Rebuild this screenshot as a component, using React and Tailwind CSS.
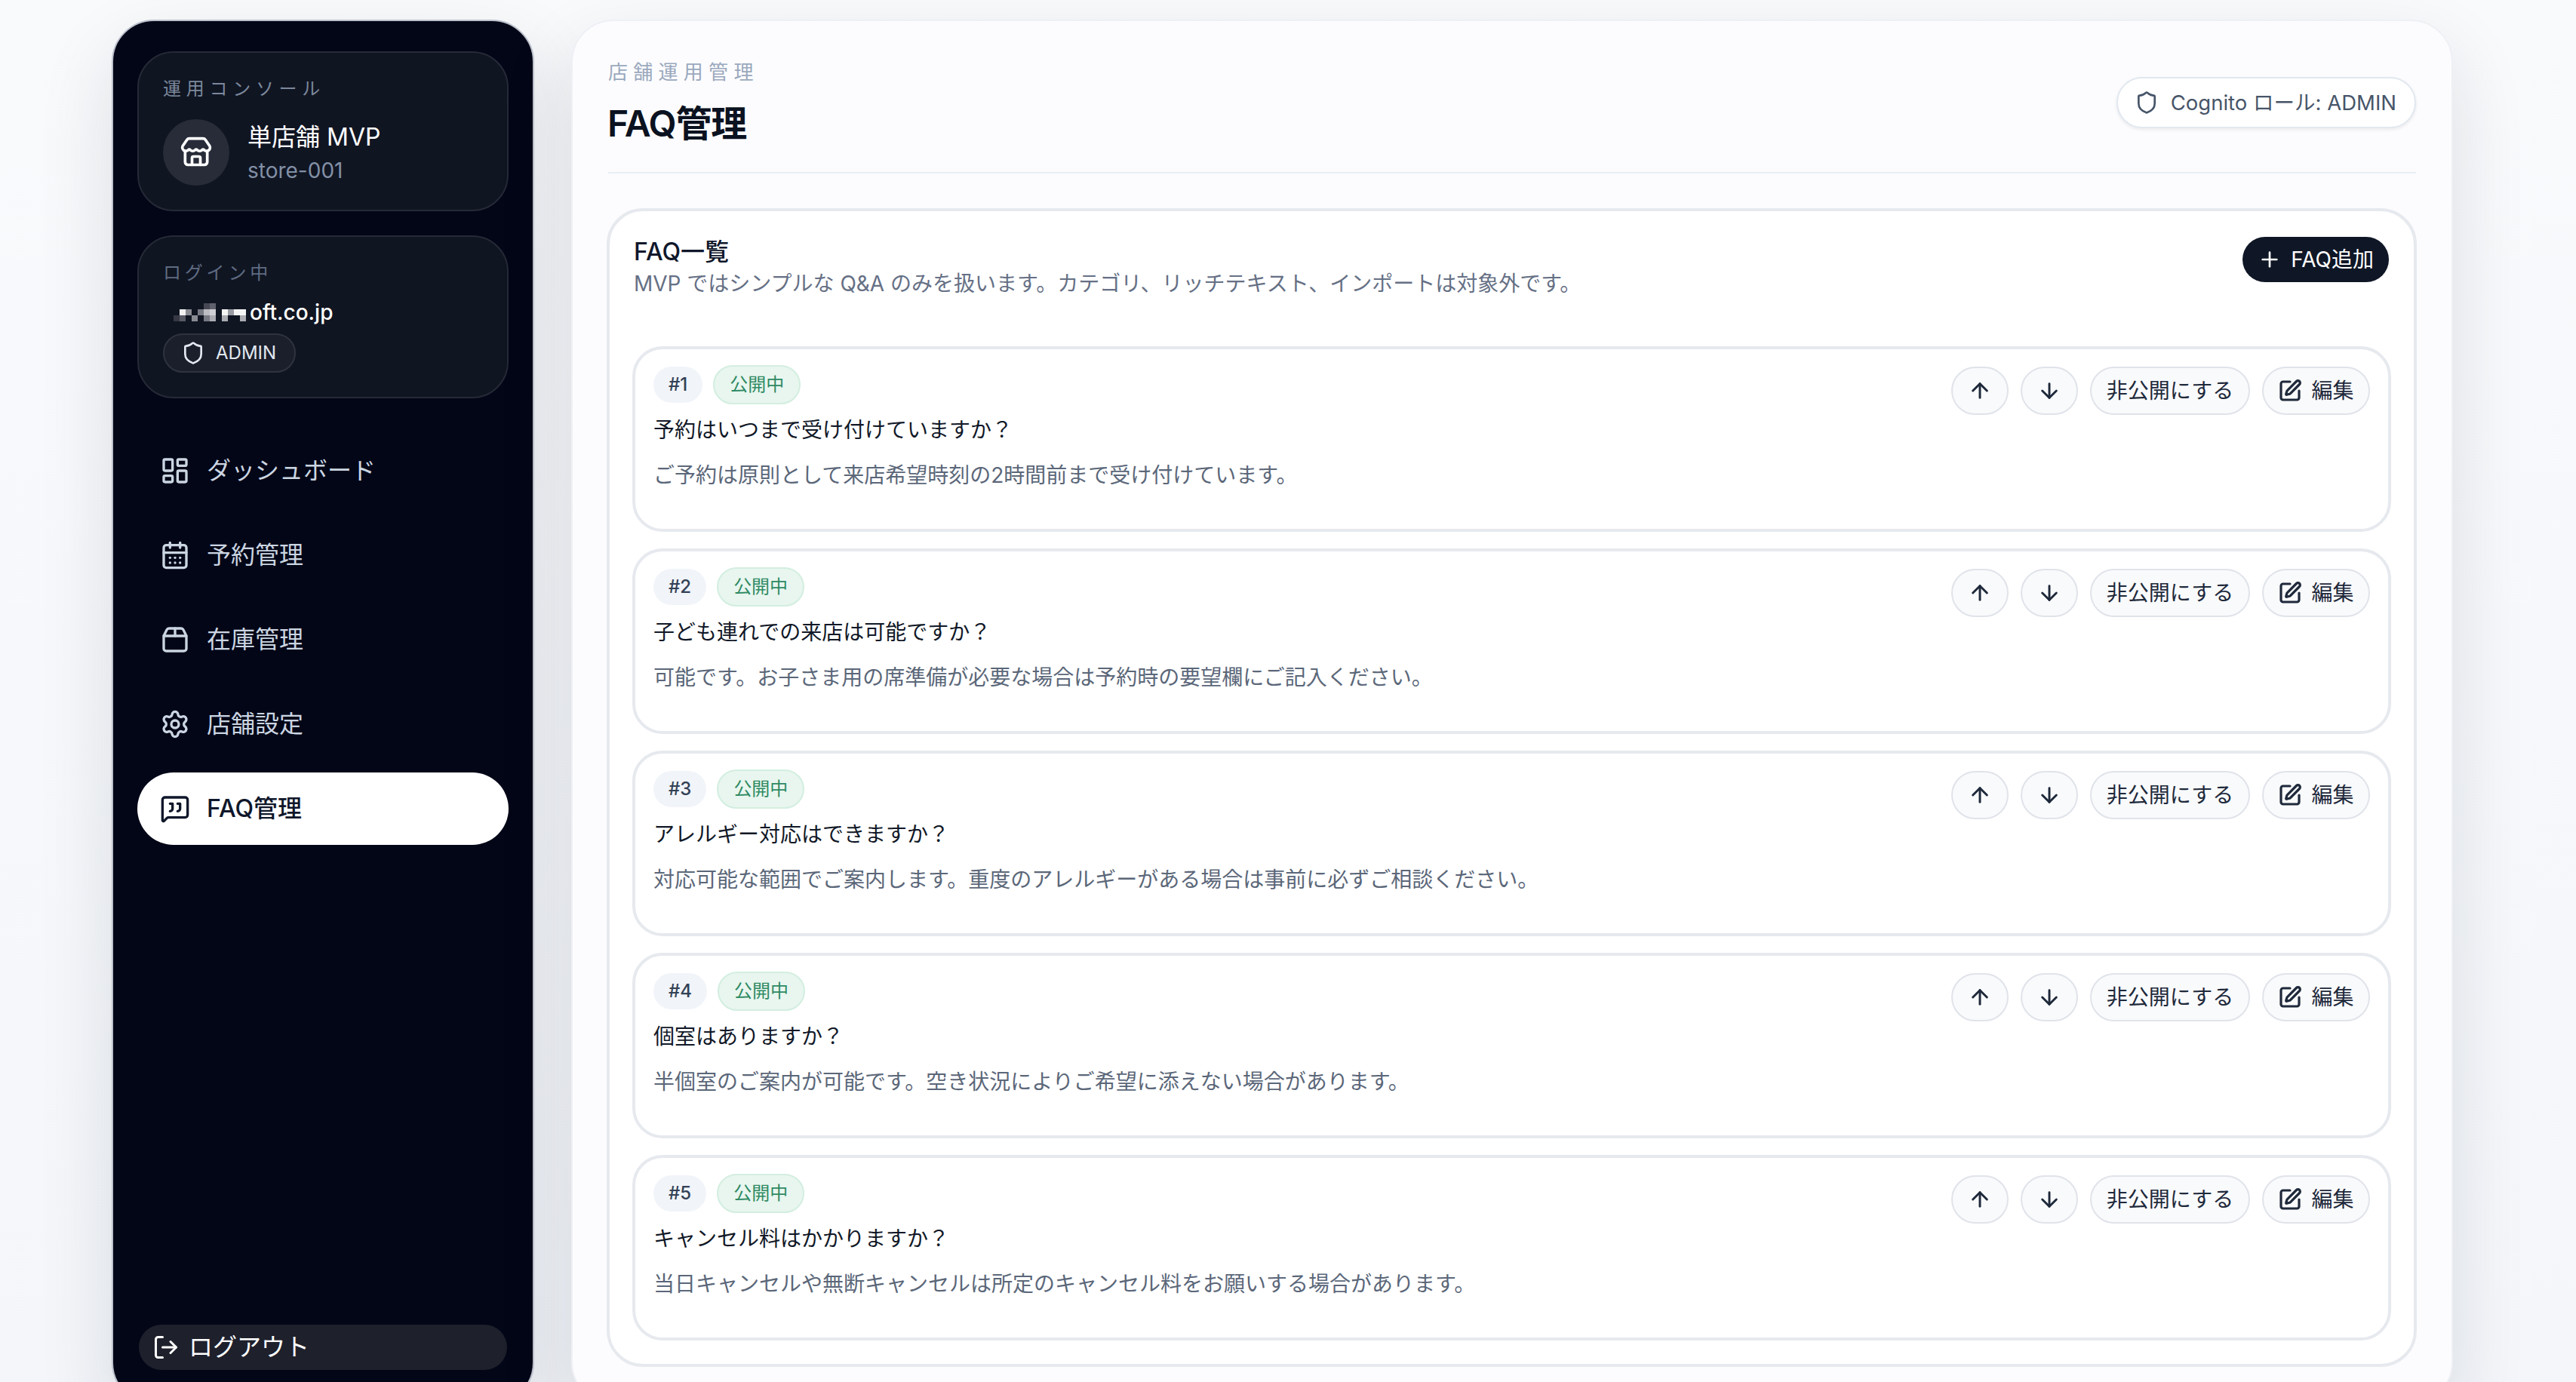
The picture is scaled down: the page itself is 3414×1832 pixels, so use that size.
import React from "react";
import {
  ArrowDown,
  ArrowUp,
  CalendarDays,
  LayoutDashboard,
  LogOut,
  MessageSquareQuote,
  Package2,
  Plus,
  Settings,
  Shield,
  SquarePen,
  Store,
} from "lucide-react";

const navItems = [
  { label: "ダッシュボード", Icon: LayoutDashboard },
  { label: "予約管理", Icon: CalendarDays },
  { label: "在庫管理", Icon: Package2 },
  { label: "店舗設定", Icon: Settings },
  { label: "FAQ管理", Icon: MessageSquareQuote, active: true },
];

const faqs = [
  { q: "予約はいつまで受け付けていますか？", a: "ご予約は原則として来店希望時刻の2時間前まで受け付けています。" },
  { q: "子ども連れでの来店は可能ですか？", a: "可能です。お子さま用の席準備が必要な場合は予約時の要望欄にご記入ください。" },
  { q: "アレルギー対応はできますか？", a: "対応可能な範囲でご案内します。重度のアレルギーがある場合は事前に必ずご相談ください。" },
  { q: "個室はありますか？", a: "半個室のご案内が可能です。空き状況によりご希望に添えない場合があります。" },
  { q: "キャンセル料はかかりますか？", a: "当日キャンセルや無断キャンセルは所定のキャンセル料をお願いする場合があります。" },
];

const pixels = [
  [5, 0, "#454852"], [6, 0, "#5f626c"],
  [1, 1, "#f2f2f2"], [2, 1, "#8a8c94"], [4, 1, "#777a83"], [5, 1, "#bcbdc2"], [6, 1, "#cfd0d4"],
  [8, 1, "#f5f5f5"], [9, 1, "#9a9ca3"], [10, 1, "#f5f5f5"], [11, 1, "#f5f5f5"],
  [0, 2, "#363944"], [1, 2, "#575a64"], [3, 2, "#8a8c94"], [5, 2, "#777a83"], [6, 2, "#aaacb2"],
  [8, 2, "#aaacb2"], [11, 2, "#aaacb2"],
];

function ActionButton({ children, className = "" }) {
  return (
    <button className={`flex h-[64px] items-center justify-center rounded-[32px] border-2 border-[#e0e3ea] bg-[#f9fafb] text-[28px] leading-10 text-[#1e293b] ${className}`}>
      {children}
    </button>
  );
}

function FaqItem({ index, q, a }) {
  return (
    <div className="flex h-[246px] items-start justify-between rounded-[40px] border-4 border-[#e6e9ee] bg-white px-6 pt-[21px]">
      <div>
        <div className="flex h-[52px] items-center gap-[14px]">
          <span className="flex h-12 items-center rounded-full bg-[#f1f4f9] px-5 text-[24px] font-medium leading-8 text-[#334155]">#{index}</span>
          <span className="flex h-[52px] items-center rounded-full border-2 border-[#d3eee0] bg-[#e8f6ef] px-5 text-[24px] leading-8 text-[#2f8a63]">公開中</span>
        </div>
        <p className="mt-[14px] text-[28px] leading-10 text-[#111827]">{q}</p>
        <p className="mt-5 text-[28px] leading-10 text-[#5b6779]">{a}</p>
      </div>
      <div className="mt-[2px] flex gap-4">
        <ActionButton className="w-[76px]"><ArrowUp size={32} strokeWidth={2.2} /></ActionButton>
        <ActionButton className="w-[76px]"><ArrowDown size={32} strokeWidth={2.2} /></ActionButton>
        <ActionButton className="w-[212px]">非公開にする</ActionButton>
        <ActionButton className="w-[143px] gap-3"><SquarePen size={32} strokeWidth={2.4} />編集</ActionButton>
      </div>
    </div>
  );
}

export default function App() {
  return (
    <div className="flex h-screen gap-[49px] overflow-hidden bg-[linear-gradient(180deg,#f9fafc_0%,#f4f6fa_100%)] pl-[148px] pt-[26px] font-['Inter','Noto_Sans_CJK_JP',sans-serif]">
      <aside className="flex h-[1836px] w-[560px] shrink-0 flex-col rounded-[56px] border-2 border-[#bcc1cc] bg-[#020617] px-8 pb-[44px] pt-10 shadow-[0_40px_100px_rgba(15,23,42,0.12)]">
        <div className="rounded-[48px] border-2 border-[#262a37] bg-[#101522] p-8">
          <div className="text-[24px] leading-8 tracking-[0.28em] text-[#7c889c]">運用コンソール</div>
          <div className="mt-6 flex items-center gap-6">
            <div className="flex h-[88px] w-[88px] items-center justify-center rounded-full bg-[#282c38]">
              <Store size={44} strokeWidth={2} className="text-white" />
            </div>
            <div>
              <div className="text-[32px] leading-[48px] text-white">単店舗 MVP</div>
              <div className="text-[28px] leading-10 text-[#8290a6]">store-001</div>
            </div>
          </div>
        </div>

        <div className="mt-8 rounded-[48px] border-2 border-[#262a37] bg-[#101522] p-8">
          <div className="text-[24px] leading-8 tracking-[0.2em] text-[#5f6c82]">ログイン中</div>
          <div className="mt-4 flex h-10 items-center text-[28px] font-medium leading-10 text-white">
            <svg width="115" height="24" viewBox="0 0 115 24" className="shrink-0">
              {pixels.map(([c, r, fill], i) => (
                <rect key={i} x={14 + c * 8} y={r * 8} width="8" height="8" fill={fill} />
              ))}
            </svg>
            <span>oft.co.jp</span>
          </div>
          <div className="mt-2 inline-flex h-[52px] items-center gap-[14px] rounded-full border-2 border-[#2f3340] bg-[#1b1f2c] pl-[22px] pr-6 text-[24px] leading-8 text-[#e2e8f0]">
            <Shield size={32} strokeWidth={2} />
            ADMIN
          </div>
        </div>

        <nav className="mt-12 flex flex-1 flex-col gap-4">
          {navItems.map(({ label, Icon, active }) => (
            <div
              key={label}
              className={`flex h-[96px] items-center gap-[22px] rounded-full px-[30px] text-[32px] leading-10 ${active ? "bg-white font-medium text-[#0f172a]" : "text-[#cbd5e1]"}`}
            >
              <Icon size={40} strokeWidth={2} />
              {label}
            </div>
          ))}
        </nav>

        <button className="mx-[2px] flex h-[60px] items-center gap-3 rounded-full bg-[#1e202c] pl-[18px] text-[32px] leading-10 text-white">
          <LogOut size={36} strokeWidth={2} />
          ログアウト
        </button>
      </aside>

      <main className="h-[1836px] w-[2494px] shrink-0 rounded-[56px] border-2 border-[#eef0f5] bg-[#fcfcfe] px-[47px] pt-[52px] shadow-[0_40px_100px_rgba(15,23,42,0.12)]">
        <header className="flex items-center justify-between border-b-2 border-[#e9eef5] pb-[36px]">
          <div>
            <div className="text-[26px] leading-8 tracking-[0.28em] text-[#9aa8bd]">店舗運用管理</div>
            <h1 className="-ml-px mt-6 text-[48px] font-semibold leading-[56px] tracking-tight text-[#0b1220]">FAQ管理</h1>
          </div>
          <div className="flex h-[68px] items-center gap-4 rounded-full border-2 border-[#e2e8f0] bg-white pl-[22px] pr-6 text-[27.5px] leading-10 text-[#475569] shadow-[0_2px_4px_rgba(15,23,42,0.08)]">
            <Shield size={32} strokeWidth={2} />
            Cognito ロール: ADMIN
          </div>
        </header>

        <section className="-ml-[2px] -mr-px mt-[46px] rounded-[48px] border-4 border-[#e6e9ee] bg-white px-[30px] pb-[31px] pt-[34px]">
          <div className="flex items-start justify-between pl-[2px] pr-[3px]">
            <div>
              <h2 className="text-[32px] font-medium leading-10 text-[#0f172a]">FAQ一覧</h2>
              <p className="mt-[2px] text-[28px] leading-10 text-[#667085]">MVP ではシンプルな Q&amp;A のみを扱います。カテゴリ、リッチテキスト、インポートは対象外です。</p>
            </div>
            <button className="flex h-[60px] items-center gap-3 rounded-full bg-[#0f1726] pl-5 pr-5 text-[28px] leading-10 text-white">
              <Plus size={32} strokeWidth={2} />
              FAQ追加
            </button>
          </div>
          <div className="mt-[63px] flex flex-col gap-[22px]">
            {faqs.map((f, i) => (
              <FaqItem key={i} index={i + 1} q={f.q} a={f.a} />
            ))}
          </div>
        </section>
      </main>
    </div>
  );
}
